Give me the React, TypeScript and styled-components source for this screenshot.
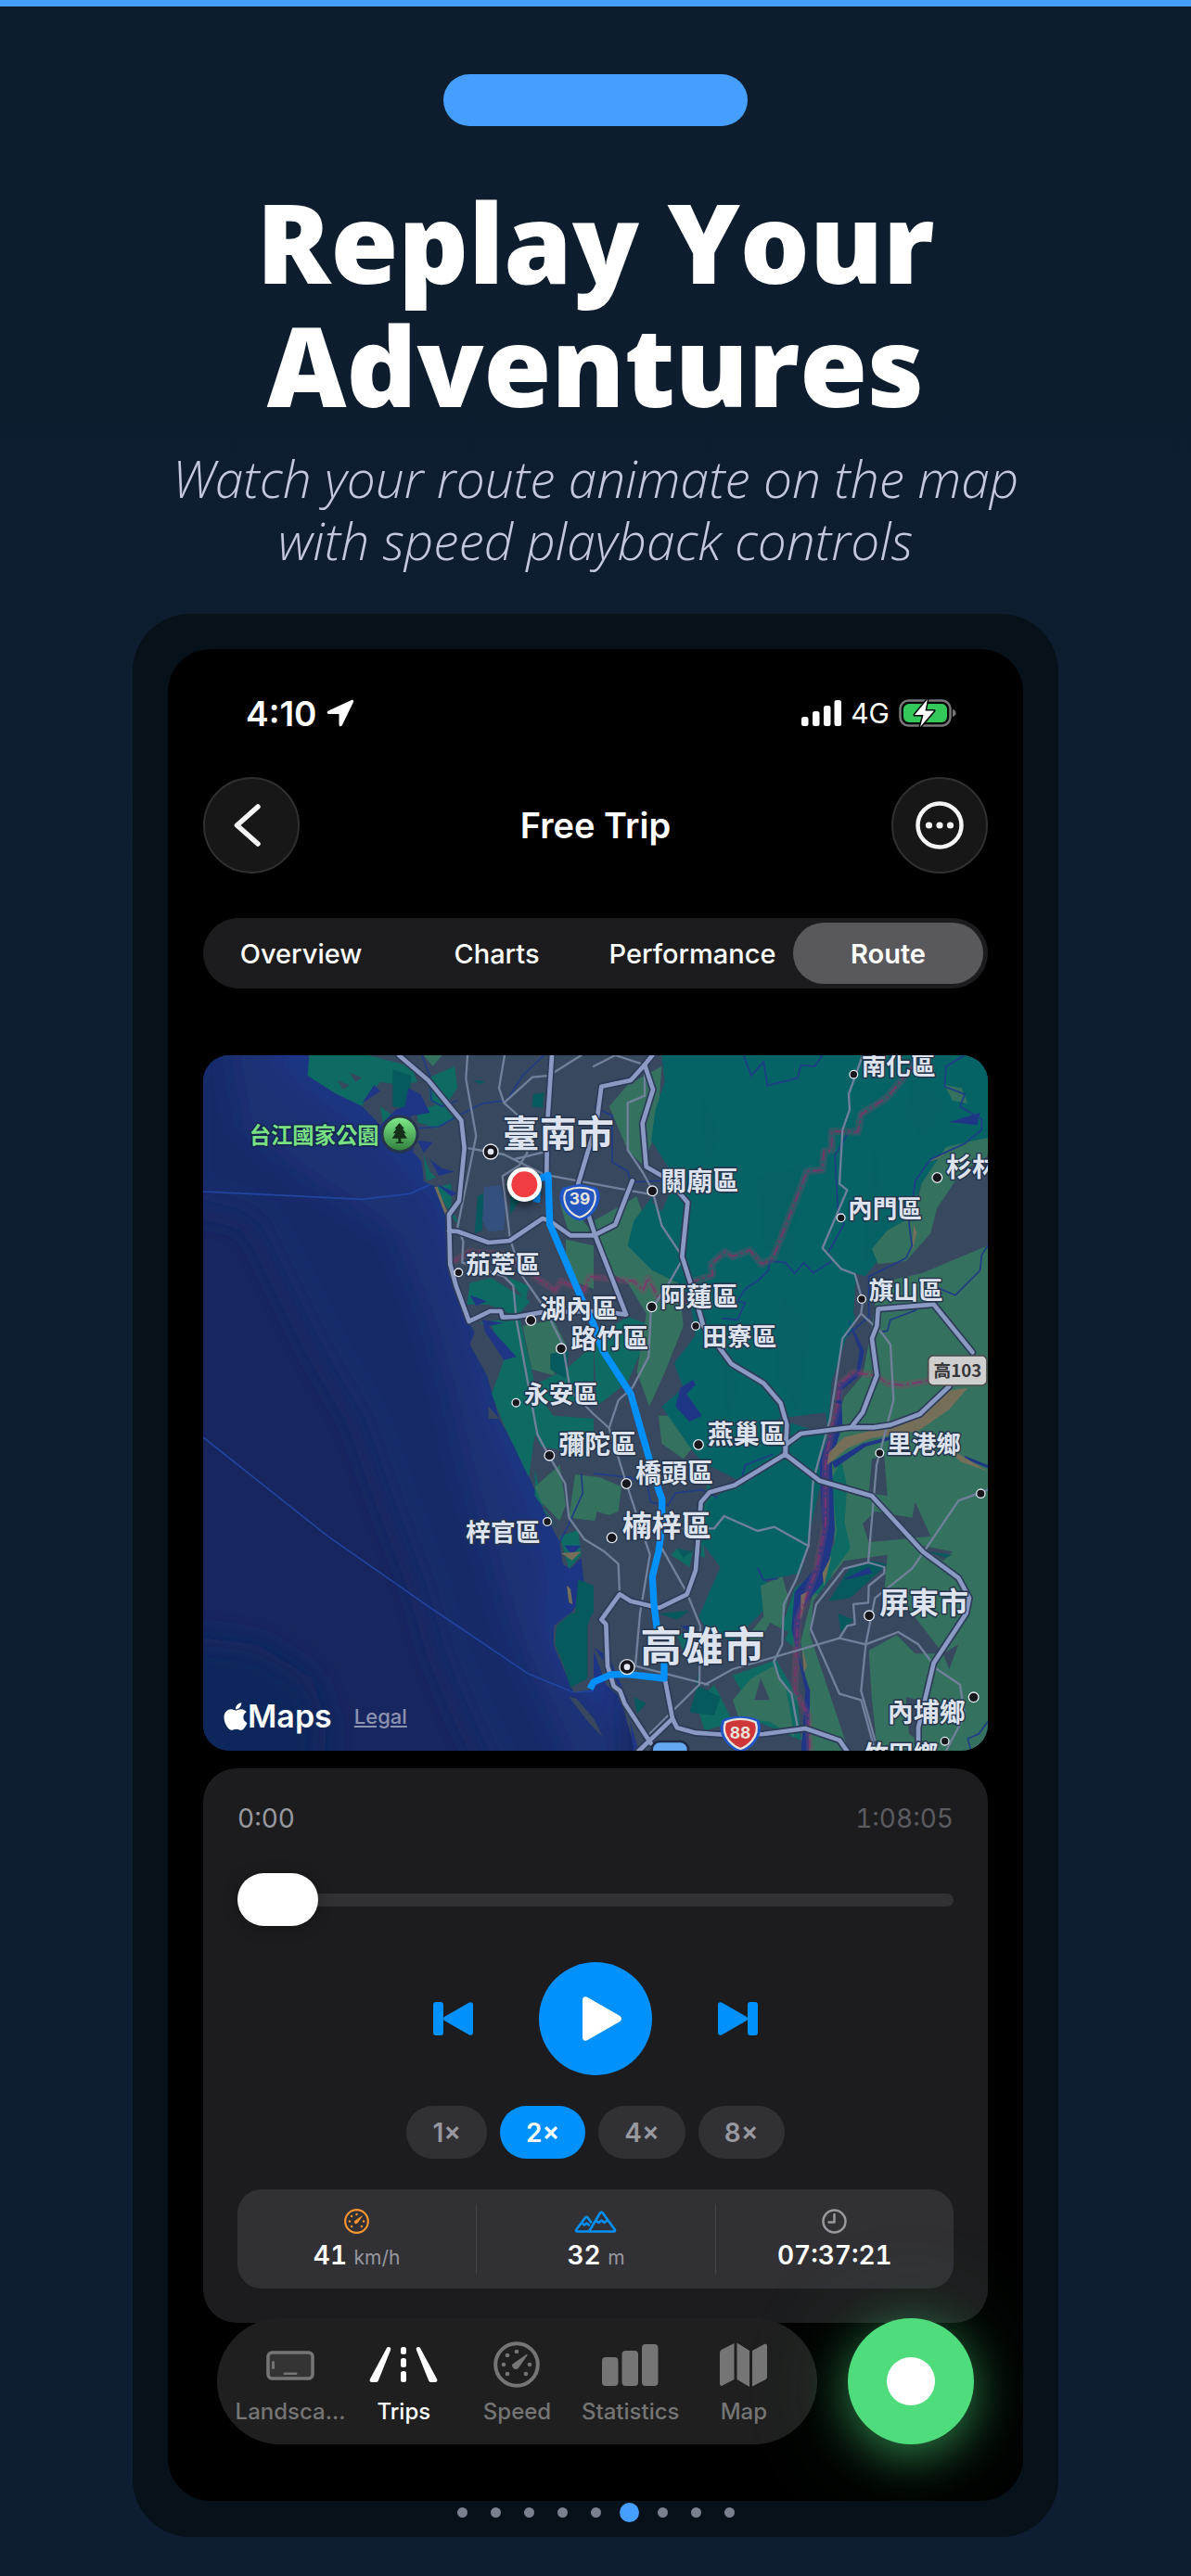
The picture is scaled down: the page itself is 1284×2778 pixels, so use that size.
import React, { useState } from "react";
import styled, { createGlobalStyle } from "styled-components";
import { FaApple } from "react-icons/fa";

const ui = `Inter, "Noto Sans CJK TC", sans-serif`;
const blue = "#0091ff";

const GlobalStyle = createGlobalStyle`
  *, *::before, *::after { box-sizing: border-box; }
  body { margin: 0; background: #0e1d2f; }
  button { font: inherit; color: inherit; border: 0; padding: 0; background: none; cursor: pointer; }
  svg { display: block; }
`;

/* ---------- Page ---------- */

const Page = styled.main`
  display: flex;
  flex-direction: column;
  align-items: center;
  border-top: 7px solid #469fff;
  padding: 73px 143px 42px;
  background: linear-gradient(#0e1d2e, #0e1d31);
  font-family: ${ui};
  color: #fff;
`;

const Pill = styled.div`
  width: 328px;
  height: 56px;
  border-radius: 28px;
  background: #469fff;
`;

const Headline = styled.h1`
  margin: 58px 0 0;
  font: 800 118px/133px "Open Sans", sans-serif;
  text-align: center;
`;

const Tagline = styled.p`
  margin: 22px 0 0;
  font: italic 300 55px/67px "Open Sans", sans-serif;
  text-align: center;
  color: #c4c8de;
`;

const Frame = styled.section`
  align-self: stretch;
  margin-top: 46px;
  padding: 38px 38px 16px;
  border-radius: 62px;
  background: #07111a;
`;

const Screen = styled.div`
  position: relative;
  overflow: hidden;
  padding: 46px 38px 192px;
  border-radius: 46px;
  background: #000;
`;

const Dots = styled.div`
  display: flex;
  justify-content: center;
  align-items: center;
  height: 21px;
  margin-top: 2px;
`;

const DotCell = styled.span<{ $active: boolean }>`
  display: grid;
  place-items: center;
  width: 36px;
  &::before {
    content: "";
    width: ${(p) => (p.$active ? 21 : 11)}px;
    height: ${(p) => (p.$active ? 21 : 11)}px;
    border-radius: 50%;
    background: ${(p) => (p.$active ? "#469fff" : "#7b808f")};
  }
`;

/* ---------- Status and navigation ---------- */

const StatusBar = styled.div`
  display: flex;
  justify-content: space-between;
  align-items: center;
  height: 46px;
  padding: 0 34px 0 46px;
`;

const StatusGroup = styled.div`
  display: flex;
  align-items: center;
  gap: 10px;
`;

const Clock = styled.span`
  font-size: 37px;
  font-weight: 600;
`;

const Carrier = styled.span`
  font-size: 30px;
  font-weight: 400;
`;

const NavBar = styled.header`
  display: flex;
  justify-content: space-between;
  align-items: center;
  margin-top: 46px;
`;

const RoundButton = styled.button`
  display: grid;
  place-items: center;
  width: 104px;
  height: 104px;
  border: 2px solid #303030;
  border-radius: 50%;
  background: #171717;
`;

const NavTitle = styled.h2`
  margin: 0;
  font-size: 38px;
  font-weight: 600;
`;

const Segments = styled.div`
  display: grid;
  grid-template-columns: repeat(4, 1fr);
  column-gap: 6px;
  height: 76px;
  margin-top: 48px;
  padding: 5px 5px 5px 3px;
  border-radius: 38px;
  background: #1c1c1e;
`;

const Segment = styled.button<{ $active: boolean }>`
  border-radius: 33px;
  background: ${(p) => (p.$active ? "#59585d" : "transparent")};
  font-size: 29px;
  font-weight: ${(p) => (p.$active ? 600 : 500)};
  white-space: nowrap;
`;

/* ---------- Map ---------- */

const MapCard = styled.div`
  position: relative;
  overflow: hidden;
  margin-top: 72px;
  border-radius: 28px;
`;

const MapSvg = styled.svg`
  width: 100%;
  height: auto;
  aspect-ratio: 2538 / 2250;
`;

const Attribution = styled.div`
  position: absolute;
  left: 22px;
  bottom: 17px;
  display: flex;
  align-items: center;
  gap: 24px;
`;

const MapsBrand = styled.span`
  display: flex;
  align-items: center;
  font-size: 34px;
  font-weight: 600;
`;

const AppleMark = styled(FaApple)`
  width: 26px;
  height: 34px;
`;

const LegalLink = styled.a`
  font-size: 22px;
  font-weight: 500;
  color: #8c92b0;
`;

/* ---------- Player ---------- */

const Player = styled.section`
  display: flex;
  flex-direction: column;
  margin-top: 19px;
  padding: 37px;
  border-radius: 36px;
  background: #1c1c1e;
`;

const Times = styled.div`
  display: flex;
  justify-content: space-between;
  font-size: 28px;
  line-height: 34px;
  font-variant-numeric: tabular-nums;
  color: #98989f;
`;

const Remaining = styled.span`
  color: #5b5b60;
`;

const Scrubber = styled.input`
  appearance: none;
  width: 100%;
  height: 57px;
  margin: 42px 0 0;
  background: transparent;
  &::-webkit-slider-runnable-track {
    height: 14px;
    border-radius: 7px;
    background: #313134;
  }
  &::-webkit-slider-thumb {
    appearance: none;
    width: 87px;
    height: 57px;
    margin-top: -22px;
    border-radius: 29px;
    background: #fff;
    box-shadow: 0 2px 16px rgba(0, 0, 0, 0.25);
  }
`;

const Transport = styled.div`
  display: flex;
  justify-content: center;
  align-items: center;
  gap: 71px;
  margin-top: 39px;
  color: ${blue};
`;

const PlayButton = styled.button`
  display: grid;
  place-items: center;
  width: 122px;
  height: 122px;
  border-radius: 50%;
  background: ${blue};
`;

const Speeds = styled.div`
  display: flex;
  justify-content: center;
  gap: 14px;
  margin-top: 33px;
`;

const SpeedChip = styled.button<{ $active: boolean }>`
  height: 57px;
  padding: 0 28px;
  border-radius: 29px;
  background: ${(p) => (p.$active ? blue : "#313035")};
  color: ${(p) => (p.$active ? "#fff" : "#98989f")};
  font-size: 28px;
  font-weight: 600;
`;

const Stats = styled.div`
  display: grid;
  grid-template-columns: repeat(3, 1fr);
  height: 107px;
  margin-top: 33px;
  padding: 16px 0;
  border-radius: 26px;
  background: #313035;
`;

const Stat = styled.div`
  display: flex;
  flex-direction: column;
  align-items: center;
  padding-top: 4px;
  gap: 7px;
  & + & { border-left: 1px solid #444449; }
`;

const StatValue = styled.div`
  font-size: 28px;
  line-height: 32px;
  font-weight: 600;
  font-variant-numeric: tabular-nums;
`;

const Unit = styled.span`
  font-size: 21px;
  font-weight: 400;
  color: #98989f;
`;

/* ---------- Floating tab bar ---------- */

const Floating = styled.div`
  position: absolute;
  left: 53px;
  right: 53px;
  bottom: 61px;
  display: flex;
  gap: 33px;
`;

const TabBar = styled.nav`
  flex: 1;
  display: grid;
  grid-template-columns: repeat(5, 1fr);
  height: 136px;
  padding: 0 18px;
  border-radius: 68px;
  background: #1f1f1f;
`;

const Tab = styled.button<{ $active: boolean }>`
  display: flex;
  flex-direction: column;
  align-items: center;
  padding-top: 25px;
  gap: 11px;
  color: ${(p) => (p.$active ? "#fff" : "#757575")};
  font-size: 24px;
  line-height: 30px;
  font-weight: 500;
  white-space: nowrap;
`;

const RecordButton = styled.button`
  display: grid;
  place-items: center;
  width: 136px;
  height: 136px;
  border-radius: 50%;
  background: #4edc7c;
  box-shadow: 0 12px 48px rgba(78, 220, 124, 0.5), 0 6px 120px rgba(78, 220, 124, 0.22);
  &::before {
    content: "";
    width: 52px;
    height: 52px;
    border-radius: 50%;
    background: #fff;
  }
`;

/* ---------- Icons ---------- */

const LocationIcon = () => (
  <svg width="30" height="30" viewBox="0 0 30 30" fill="#fff">
    <path d="M27 1 2 12.5C0 13.5.5 16 2.500 16H13.500V27.500c0 2 2.500 2.500 3.400.6L29 3C29.600 1.500 28.500.4 27 1Z" />
  </svg>
);

const SignalIcon = () => (
  <svg width="43" height="28" viewBox="0 0 43 28" fill="#fff">
    <rect y="18" width="7.500" height="10" rx="2.500" />
    <rect x="12" y="12" width="7.500" height="16" rx="2.500" />
    <rect x="24" y="6" width="7.500" height="22" rx="2.500" />
    <rect x="35.500" width="7.500" height="28" rx="2.500" />
  </svg>
);

const BatteryIcon = () => (
  <svg width="62" height="32" viewBox="0 0 62 32">
    <rect x="1.500" y="2.500" width="54" height="27" rx="9" fill="none" stroke="#77777a" strokeWidth="2.500" />
    <rect x="5" y="6" width="47" height="20" rx="6" fill="#34c759" />
    <path d="M58 12v8c2-.6 3.500-2 3.500-4s-1.500-3.400-3.500-4Z" fill="#77777a" />
    <path d="M31 1 17 18h9.500l-3.500 13L38 13.500h-9.500Z" fill="#fff" stroke="#000" strokeWidth="3" paintOrder="stroke" strokeLinejoin="round" />
  </svg>
);

const ChevronIcon = () => (
  <svg width="48" height="48" viewBox="0 0 48 48" fill="none" stroke="#f5f5f5" strokeWidth="5.500" strokeLinecap="round" strokeLinejoin="round">
    <path d="M31 4 8.500 24 31 44" />
  </svg>
);

const MoreIcon = () => (
  <svg width="52" height="52" viewBox="0 0 52 52" fill="#f5f5f5">
    <circle cx="26" cy="26" r="23.500" fill="none" stroke="#f5f5f5" strokeWidth="4.500" />
    <circle cx="14.500" cy="26" r="3.600" />
    <circle cx="26" cy="26" r="3.600" />
    <circle cx="37.500" cy="26" r="3.600" />
  </svg>
);

const PreviousIcon = () => (
  <svg width="43" height="36" viewBox="0 0 43 36" fill="currentColor">
    <rect width="11" height="36" rx="3" />
    <path d="M12 16 38.500.8C41-.4 43 .6 43 3v30c0 2.400-2 3.400-4.500 2.200L12 20c-1.400-1-1.400-3 0-4Z" />
  </svg>
);

const NextIcon = () => (
  <svg width="43" height="36" viewBox="0 0 43 36" fill="currentColor">
    <rect x="32" width="11" height="36" rx="3" />
    <path d="M31 16 4.500.8C2-.4 0 .6 0 3v30c0 2.400 2 3.400 4.500 2.200L31 20c1.400-1 1.400-3 0-4Z" />
  </svg>
);

const PlayIcon = () => (
  <svg width="56" height="48" viewBox="0 0 56 48" fill="#fff">
    <path d="M14 4c0-3.500 2.500-4.500 5.500-3l34 19.500c3.300 2 3.300 5 0 7L19.500 47c-3 1.500-5.500.5-5.500-3Z" />
  </svg>
);

const GaugeIcon = ({ size }: { size: number }) => (
  <svg width={size} height={size} viewBox="0 0 50 50" fill="currentColor">
    <circle cx="25" cy="25" r="22.800" fill="none" stroke="currentColor" strokeWidth="4" />
    <circle cx="25" cy="11" r="2.300" />
    <circle cx="15" cy="15" r="2.300" />
    <circle cx="11" cy="25" r="2.300" />
    <circle cx="39" cy="25" r="2.300" />
    <circle cx="15" cy="35" r="2.300" />
    <circle cx="35" cy="35" r="2.300" />
    <path d="M20.500 24.500 35.500 14c1-.6 1.600.2 1 1L27.500 28c-1.700 2.500-4.500 2.500-6 1s-1.800-3-1-4.500Z" />
  </svg>
);

const MountainIcon = () => (
  <svg width="46" height="27" viewBox="0 0 46 27" fill="none" stroke="currentColor" strokeWidth="2.600" strokeLinejoin="round" strokeLinecap="round">
    <path d="M16 24.500 28 4.500c.8-1.300 2-1.300 2.800 0l13 18c.7 1.200 0 2-1.200 2H3.500c-1.300 0-2-.8-1.200-2L12 9.500c.8-1 1.800-1 2.600 0l3.600 5" />
    <path d="m23.500 12.500 3 2.500 3-2.500 3 2.500 3-2.500M8.500 15.500l2.500 2 2.500-2 2.500 2" />
  </svg>
);

const TimeIcon = () => (
  <svg width="27" height="27" viewBox="0 0 27 27" fill="none" stroke="currentColor" strokeWidth="2.500" strokeLinecap="round" strokeLinejoin="round">
    <circle cx="13.500" cy="13.500" r="12" />
    <path d="M13.500 6v8.500H7.500" />
  </svg>
);

const LandscapeIcon = () => (
  <svg width="52" height="50" viewBox="0 0 52 50">
    <rect x="2" y="12" width="48" height="28" rx="4.500" fill="#343434" stroke="currentColor" strokeWidth="3.600" />
    <rect x="6" y="21" width="3" height="9" rx="1.500" fill="currentColor" />
    <rect x="18.500" y="33.500" width="15" height="2.400" rx="1.200" fill="currentColor" />
  </svg>
);

const RoadIcon = () => (
  <svg width="74" height="50" viewBox="0 0 74 50" fill="currentColor">
    <path d="M18.500 8c.4-1.300 1-2 2.300-2 1.900 0 3 1.200 2.300 3.200L10 42c-.6 1.500-1.400 2-3 2H3c-2 0-3-1.400-2-3.500Z" />
    <path d="M55.500 8c-.4-1.300-1-2-2.300-2-1.900 0-3 1.200-2.300 3.200L64 42c.6 1.500 1.400 2 3 2h4c2 0 3-1.400 2-3.500Z" />
    <rect x="34" y="6" width="6" height="8" rx="2.500" />
    <rect x="34" y="18" width="6" height="10" rx="2.500" />
    <rect x="34" y="32" width="6" height="12" rx="2.500" />
  </svg>
);

const BarsIcon = () => (
  <svg width="61" height="50" viewBox="0 0 61 50" fill="currentColor">
    <rect y="17" width="17.500" height="31" rx="4" />
    <rect x="21.500" y="10" width="17.500" height="38" rx="4" />
    <rect x="43" y="3" width="17.500" height="45" rx="4" />
  </svg>
);

const MapIcon = () => (
  <svg width="51" height="50" viewBox="0 0 51 50" fill="currentColor">
    <path d="M15.500 2v39L3 47.600c-1.600.8-3 .2-3-2V13c0-2 .6-3.300 2.300-4.200ZM18.500 1.500 32 10v39L18.500 41ZM35 10l13-7c1.600-.8 3 0 3 2v32.500c0 2-.6 3.200-2.300 4.100L35 48.500Z" />
  </svg>
);

/* ---------- Map drawing ---------- */

const mainRoads = [
  "660,24 755,105 862,235 872,325 855,495 822,540 826,700 845,770 887,885 955,852 990,852 995,872 1040,870 1120,856",
  "822,592 850,594 950,630 1018,624 1125,552 1148,560 1215,607 1290,607 1360,572 1415,430",
  "1155,24 1150,100 1140,250 1138,410",
  "1480,24 1455,55 1410,105 1315,125 1300,240 1240,440 1295,607 1395,863 1340,856",
  "1455,55 1482,135 1448,245 1460,385 1530,425 1594,500 1576,675 1625,830 1645,900 1735,1022 1840,1085 1895,1150 1915,1220 1910,1320",
  "1120,856 1290,852 1340,856",
  "2515,985 2390,830 2210,845 2206,900 2190,940 2206,1060 2160,1180 2125,1225",
  "2440,1095 2345,1185 2250,1220 2195,1228 2120,1228 1960,1248 1910,1285 1910,1315 1745,1415 1665,1438 1637,1470 1620,1690 1592,1768 1502,1812 1410,1790 1374,1768 1315,1850 1330,1865 1335,2000 1355,2065 1375,2080 1390,2120 1475,2250",
  "1910,1315 2020,1400 2190,1450 2355,1630 2470,1715 2505,1780 2495,1830 2390,1990 2340,2200 2340,2290",
  "1522,2050 1545,2170 1420,2290",
  "1545,2170 1560,2200 1620,2216 1740,2224 1840,2220 1975,2202 2085,2240 2120,2290",
];

const sideRoads = [
  "882,24 877,100 910,285 850,580 868,625 865,695 1000,740 1030,770 1040,880 1108,1250 1140,1310 1198,1410 1210,1520 1260,1590 1325,1630 1370,1670 1374,1768",
  "1002,24 984,130 1000,178 1070,240 1075,340 1050,380 995,415 1020,620 1060,740 1130,840 1190,960 1215,1110 1290,1185 1340,1230 1396,1410 1472,1640 1440,1830 1425,2000 1660,2060",
  "1000,178 1092,95 1145,90 1250,24",
  "870,322 1000,345 1130,410 1290,440 1480,475",
  "1035,360 1140,335",
  "1290,60 1360,24 1455,55 1455,155 1400,178 1400,330 1450,405 1480,460 1510,575 1580,680",
  "2160,24 2115,150 2118,200 2095,265 2085,440 2110,460 2030,648 2090,715 2135,732 2160,820 2155,860 2095,940 2055,1200 2000,1400 1985,1610 1945,1720 1905,1800 1900,1930 1873,1985 1890,2040 1930,2090 1950,2200",
  "2155,860 2220,920 2250,960 2260,1140 2205,1350 2178,1665 2100,1685 2010,1800 1992,1880 2085,2090 2155,2110 2200,2274",
  "2178,1665 2230,1680 2230,1700 2180,1740 2178,1795 2130,1800 2135,1865 2110,1870 2085,1910",
  "1650,2060 1740,2010 2085,1910 2170,1930 2275,1890 2340,1930 2400,2010 2475,2060 2490,2160 2430,2274",
  "2565,1430 2470,1465 2365,1620 2320,1685 2200,1780 2170,1930 2155,2080 2200,2240",
  "1500,1600 1590,1760 1635,1870 1632,2060 1470,2220",
  "1580,1555 1680,1555 1712,1515 1820,1563 1875,1550 1985,1612",
  "1580,680 1540,750 1475,850 1468,1000 1415,1100 1370,1140 1340,1230",
];

const streams = [
  "735,24 760,90 765,170 800,190 850,170",
  "725,260 790,255 860,215 930,180 1010,170 1060,90 1130,24",
  "1775,24 1800,90 1840,45 1852,122 1950,98 1960,55 2005,60 2030,24",
  "1290,190 1350,220 1350,370 1400,400 1410,435 1500,430 1570,415",
  "2110,280 2070,350 2080,520 2100,570 2050,660",
  "2490,24 2430,60 2425,125 2490,150 2475,190 2545,230 2545,265 2490,310 2380,360 2330,430 2325,470 2310,570 2320,640 2300,680 2180,740 2180,870 2110,930",
  "1860,690 1910,695 1940,730 1970,695 2000,728 2060,690",
  "1860,690 1855,720 1825,750 1780,780 1755,820 1780,825 1755,880 1705,875",
  "2565,640 2545,670 2540,720 2460,800 2400,775 2330,850 2250,880 2240,915 2220,920",
  "1290,1377 1410,1390 1465,1420 1475,1470 1530,1480 1555,1440 1640,1430 1690,1455",
  "1770,1390 1780,1350 1870,1315",
  "1250,1378 1255,1440 1210,1540 1180,1600",
  "1820,1683 1840,1722 1885,1717",
  "2565,2180 2535,2220 2500,2235 2510,2274",
];

type Place = { name: string; x: number; y: number; size: number; dot: [number, number]; capital?: boolean };

const places: Place[] = [
  { name: "臺南市", x: 995, y: 322, size: 120, dot: [957, 336], capital: true },
  { name: "高雄市", x: 1441, y: 1986, size: 134, dot: [1398, 2003], capital: true },
  { name: "屏東市", x: 2214, y: 1830, size: 96, dot: [2181, 1837] },
  { name: "楠梓區", x: 1382, y: 1582, size: 96, dot: [1349, 1585] },
  { name: "茄萣區", x: 877, y: 728, size: 80, dot: [853, 727] },
  { name: "湖內區", x: 1116, y: 877, size: 84, dot: [1087, 882] },
  { name: "路竹區", x: 1216, y: 972, size: 84, dot: [1185, 973] },
  { name: "永安區", x: 1065, y: 1150, size: 80, dot: [1039, 1148] },
  { name: "彌陀區", x: 1177, y: 1314, size: 84, dot: [1147, 1319] },
  { name: "梓官區", x: 877, y: 1596, size: 80, dot: [1140, 1533] },
  { name: "關廟區", x: 1507, y: 462, size: 84, dot: [1480, 463] },
  { name: "阿蓮區", x: 1505, y: 836, size: 84, dot: [1478, 838] },
  { name: "田寮區", x: 1642, y: 962, size: 80, dot: [1620, 900] },
  { name: "南化區", x: 2156, y: 88, size: 80, dot: [2131, 86] },
  { name: "內門區", x: 2112, y: 550, size: 80, dot: [2090, 550] },
  { name: "杉林區", x: 2430, y: 418, size: 84, dot: [2401, 420] },
  { name: "旗山區", x: 2180, y: 814, size: 80, dot: [2157, 813] },
  { name: "燕巢區", x: 1658, y: 1282, size: 84, dot: [1629, 1284] },
  { name: "橋頭區", x: 1425, y: 1407, size: 84, dot: [1396, 1410] },
  { name: "里港鄉", x: 2238, y: 1312, size: 80, dot: [2215, 1311] },
  { name: "內埔鄉", x: 2240, y: 2180, size: 84, dot: [2519, 2101] },
  { name: "竹田鄉", x: 2164, y: 2314, size: 80, dot: [2426, 2243] },
];

const CountyBorder = ({ points }: { points: string }) => (
  <g fill="none" strokeLinejoin="round">
    <polyline points={points} stroke="#8b4468" strokeWidth="24" opacity=".3" />
    <polyline points={points} stroke="#82336b" strokeWidth="7" strokeDasharray="34 10 8 10" opacity=".75" />
  </g>
);

const RouteMap = () => (
  <MapSvg viewBox="27 24 2538 2250" preserveAspectRatio="xMidYMid slice" role="img" aria-label="Route map">
    <defs>
      <filter id="soft" x="-20%" y="-20%" width="140%" height="140%"><feGaussianBlur stdDeviation="48" /></filter>
      <filter id="shade" x="-50%" y="-50%" width="200%" height="200%"><feGaussianBlur stdDeviation="14" /></filter>
      <linearGradient id="park" x2="0" y2="1"><stop stopColor="#80ec88" /><stop offset="1" stopColor="#2f7d3c" /></linearGradient>
    </defs>

    {/* sea */}
    <rect x="27" y="24" width="2538" height="2250" fill="#18265f" />
    <g filter="url(#soft)">
      <path d="M-60-60H1400V2400H980L860 2150 780 1960 720 1740 620 1480 520 1200 400 1000 280 760 180 560-60 500Z" fill="#182b6b" />
      <path d="M100-60H1400V2400H1260L1110 2080 1020 1860 940 1600 870 1340 820 1120 750 880 640 600 380 430 160 260Z" fill="#1c3074" />
      <path d="M190-60H1400V2200L1200 2060 1130 1900 1140 1700 1060 1450 940 1150 890 920 830 700 770 500 560 280 340 120Z" fill="#1f3685" />
      <path d="M-60 1900 200 1930 380 2040 430 2200 400 2400H-60Z" fill="#0d285c" />
    </g>
    <g fill="none" stroke="#2145a0" strokeWidth="5">
      <polyline points="27,465 540,490 695,472 815,418" />
      <polyline points="27,1260 430,1580 760,1810 1080,2026 1225,2085 1290,2080" />
    </g>

    {/* land */}
    <path fill="#38485f" d="M370 24 385 60 365 90 460 150 540 188 600 250 720 262 705 335 735 370 740 432 780 450 820 545 826 700 850 800 885 885 905 920 890 960 945 1060 985 1200 1045 1310 1082 1390 1130 1500 1180 1600 1190 1670 1215 1685 1250 1650 1262 1760 1220 1825 1162 1870 1160 1930 1210 2050 1225 2085 1290 2075 1290 1950 1330 2060 1375 2100 1430 2290H2565V24Z" />
    <path fill="#38485f" d="M1210 2100 1235 2105 1290 2170 1320 2230 1280 2190Z" />
    <g fill="#0d6b64">
      <path d="M370 24 365 90 460 150 540 188 600 110 660 120 720 110 700 60 560 24ZM760 95 840 60 850 130 800 200 760 170ZM600 190 680 250 610 250ZM720 200 800 180 840 230 780 260 720 240ZM740 345 760 400 780 420 750 430Z" />
      <path d="M780 450 830 440 830 520 860 580 830 545ZM890 760 960 745 1030 790 1085 820 1040 870 950 830 880 830ZM920 890 1050 870 1100 1090 1200 1040 1290 960 1290 1300 1250 1330 1180 1300 1120 1290 1100 1250 1080 1390 1000 1220 960 1120 1000 1010 960 900Z" />
      <path d="M1010 740 1080 770 1070 820ZM1180 1580 1240 1560 1250 1640 1210 1685ZM1290 940 1400 870 1480 900 1400 1080 1300 1160ZM1100 1360 1130 1500 1180 1560 1100 1450Z" />
      <path d="M1660 1400 1690 1480 1640 1550 1650 1650 1560 1620 1540 1640 1600 1680ZM1560 1900 1610 1880 1580 1950ZM1620 2120 1680 2060 1740 2180 1650 2210ZM1740 2030 1880 1980 1950 2100 1960 2240 1820 2180Z" />
    </g>
    <path fill="#34715f" d="M1060 900 1160 880 1200 960 1160 1060 1090 1040ZM1200 620 1290 640 1290 780 1240 760 1200 690ZM1180 1350 1200 1480 1180 1530 1120 1470 1100 1420ZM1230 1380 1310 1390 1380 1420 1370 1500 1290 1530 1210 1520ZM1340 190 1400 120 1510 60 1500 200 1480 300 1450 380 1400 330ZM1290 560 1430 480 1480 640 1560 700 1580 900 1520 1050 1470 1160 1430 1050 1460 860 1400 760 1330 720ZM740 24H800L770 60ZM1500 1190 1600 1190 1640 1260 1580 1330 1510 1280ZM1180 500 1240 540 1290 600 1210 600Z" />

    <path fill="#056365" d="M1510 24 1520 110 1490 200 1476 300 1540 400 1560 470 1480 480 1420 560 1400 640 1480 720 1560 760 1600 800 1620 930 1550 1020 1580 1100 1510 1160 1600 1290 1640 1340 1760 1400 1660 1470 1640 1600 1700 1680 1630 1840 1660 1890 1740 1920 1840 1820 1850 1720 1960 1700 1990 1560 2040 1340 2060 1080 2130 900 2150 760 2200 700 2320 540 2350 440 2440 350 2565 290V24Z" />
    <g fill="#0a5c60" opacity=".3">
      <path d="M1820 420 1960 380 1930 700 1840 640ZM1640 150 1700 300 1650 360ZM2200 300 2240 620 2160 700ZM2320 100 2420 180 2360 300 2300 220ZM1900 800 1990 900 1950 1180 1880 1060ZM1700 960 1760 1100 1720 1200Z" />
    </g>
    <path fill="#34715f" d="M2190 650 2240 590 2330 540 2350 440 2430 320 2565 290V350L2480 400 2400 520 2380 600 2300 690 2210 700ZM2210 760 2350 730 2565 640V2290H2000L1960 2240 1980 2080 1960 1920 2000 1760 2070 1620 2060 1400 2050 1300 2100 1130 2160 1060 2190 900ZM2425 120 2480 130 2500 180 2450 170ZM1830 1740 1900 1710 1920 1780 1890 1900 1810 1960 1790 1900 1840 1840ZM1800 2040 1870 2000 1910 2060 1940 2230 1860 2180 1760 2170 1740 2110Z" />
    <g fill="#0d6b64">
      <path d="M2090 1480 2120 1620 2060 1700 2040 1780 2000 1760 2070 1600ZM2060 1400 2090 1330 2110 1420 2100 1560 2080 1600ZM2000 1700 1960 1780 1940 1940 1890 1900 1940 1750Z" />
    </g>

    {/* built-up areas */}
    <g fill="#38485f">
      <path d="M2000 1790 2100 1660 2240 1640 2230 1760 2290 1790 2420 1960 2330 1960 2270 1900 2180 1950 2190 2110 2210 2290H2120L2040 2050 1990 1900ZM2160 1540 2200 1500 2320 1520 2330 1470 2380 1580 2180 1600ZM2190 1330 2230 1320 2240 1450 2180 1440ZM2060 1080 2110 930 2140 960 2100 1060 2070 1180ZM2140 730 2170 740 2160 880 2130 860ZM1880 1200 2050 1250 2040 1180ZM1480 430 1540 460 1510 530 1480 500ZM1290 60 1400 30 1430 100 1320 160 1290 330ZM1290 350 1390 390 1380 450 1290 480ZM2300 2100 2340 2110 2340 2240 2310 2220ZM2420 1960 2470 1930 2440 2010ZM2350 1610 2450 1630 2420 1660ZM1830 2040 1860 2110 1810 2110ZM1860 1860 1920 1890 1880 1980 1780 2010ZM1300 1500 1370 1520 1360 1580 1290 1560Z" />
      <path d="M460 105 500 120 480 135ZM500 80 540 95 520 110ZM660 130 700 150 690 230 650 200ZM890 950 930 945 990 1030 980 1070 930 1030ZM950 1160 985 1200 950 1200ZM1130 1150 1290 1140 1290 1200 1160 1190Z" />
    </g>
    <g fill="#06595c">
      <path d="M640 70 700 90 690 200 640 190ZM1095 150 1130 145 1125 195 1090 190ZM900 105 940 108 920 118ZM915 480 935 470 930 590 905 600ZM1150 990 1210 980 1200 1070 1150 1040ZM1020 480 1040 440 1060 480 1020 540ZM1240 1720 1290 1740 1290 1830 1230 1830ZM1215 1830 1290 1815 1270 1870 1270 2040 1215 2070 1190 1990 1165 1930 1170 1870ZM1420 2100 1460 2120 1430 2155ZM1500 1830 1600 1820 1560 1850ZM1640 1980 1620 2060 1700 2100 1680 2160 1600 2150 1620 2080ZM2120 1680 2190 1660 2240 1670 2120 1780 2050 1790ZM2370 1630 2450 1640 2430 1650ZM1560 1620 1610 1630 1580 1650ZM2080 1830 2130 1850 2090 1890Z" />
    </g>
    <path fill="#34507c" d="M935 450 990 445 1005 500 1000 590 950 595 930 560Z" />
    <g fill="#1f3686">
      <path d="M690 130 730 150 760 210 700 220 690 260 600 250 650 200 680 190ZM540 180 580 120 600 140ZM720 300 770 305 740 340ZM890 800 945 820 910 835ZM930 880 1000 890 950 900 1040 1000 1000 1010 940 920ZM1195 1610 1250 1610 1220 1640ZM760 360 800 390 840 400 790 415ZM780 440 850 470 830 480ZM1570 1100 1610 1075 1620 1090 1590 1120 1640 1190 1600 1210 1555 1160ZM1290 1940 1340 1970 1400 2110 1420 2290H1440L1380 2080 1320 1980ZM1570 1870 1600 1870 1600 1890Z" />
      <path d="M2110 870 2165 980 2150 1060 2090 1110 2095 1220 2060 1330 2070 1560 2040 1720 1960 1820 1950 1960 1990 2080 1985 2290H1960L1975 2080 1930 1880 1940 1760 2010 1680 2030 1560 2020 1340 2070 1200 2080 1090 2140 1050 2150 980Z" />
      <path d="M2400 800 2420 790 2400 820ZM2440 240 2540 210 2530 250ZM2100 1720 2180 1680 2190 1700 2110 1720Z" />
      <path d="M2060 1340 2160 1280 2260 1255 2260 1265 2170 1290 2070 1360ZM2490 1320 2565 1350V1360L2490 1330Z" />
    </g>
    <g fill="#756f5a">
      <path d="M775 450 785 450 820 540 812 545ZM1185 1635 1250 1630 1220 1658ZM1203 1740 1215 1750 1222 1800 1210 1795ZM2050 1310 2100 1260 2260 1220 2360 1180 2430 1110 2500 1100 2440 1170 2340 1240 2190 1262 2110 1296 2045 1350ZM2380 1260 2490 1325 2565 1370 2480 1340ZM2030 1700 2060 1640 2035 1740ZM1960 1770 1980 1760 1960 1850ZM1965 1940 1980 2000 1970 2020ZM2370 370 2430 340 2400 360ZM2325 570 2335 600 2320 660Z" />
    </g>
    <g fill="none" stroke="#203b88" strokeWidth="5">{streams.map((s) => <polyline key={s} points={s} />)}</g>

    <CountyBorder points="822,700 890,660 1000,670 1100,740 1165,785 1185,755 1260,785 1275,740 1420,755 1450,785 1465,745 1500,810 1590,820" />
    <CountyBorder points="1600,760 1675,735 1670,700 1715,660 1740,675 1795,655 1835,700 1870,680 1980,400 2030,395 2035,335 2060,330 2060,270 2145,272 2155,215 2240,160 2330,50" />
    <CountyBorder points="2080,1140 2085,1090 2130,1050 2205,1060 2240,1085 2290,1092 2380,1075" />
    <CountyBorder points="2080,1150 2060,1230 2040,1340 2040,1540 2010,1690 1950,1850 1940,2080 1985,2160 1990,2290" />

    {/* roads */}
    <g fill="none" strokeLinejoin="round" strokeLinecap="round">
      {sideRoads.map((r) => <polyline key={r} points={r} stroke="#71809b" strokeWidth="7" />)}
      {mainRoads.map((r) => <polyline key={r} points={r} stroke="#2d3b58" strokeWidth="24" />)}
      {mainRoads.map((r) => <polyline key={r} points={r} stroke="#8a9ac3" strokeWidth="14" />)}
    </g>

    <polyline
      points="1105,500 1112,425 1143,412 1148,570 1250,810 1290,895 1320,980 1410,1120 1450,1260 1490,1400 1511,1460 1511,1550 1500,1630 1480,1710 1485,1800 1495,1880 1518,1980 1518,2040 1395,2026 1345,2028 1290,2052 1278,2074"
      fill="none" stroke={blue} strokeWidth="22" strokeLinejoin="round"
    />

    {/* places */}
    <circle cx="2542" cy="1442" r="14" fill="#16161c" stroke="#e4e8f2" strokeWidth="4" />
    {places.map((p) => (
      <g key={p.name}>
        <circle cx={p.dot[0]} cy={p.dot[1]} r={p.capital ? 24 : p.size > 82 ? 16 : 13} fill="#16161c" stroke="#e4e8f2" strokeWidth="4" />
        {p.capital && <circle cx={p.dot[0]} cy={p.dot[1]} r="10" fill="#e4e8f2" />}
        <text
          x={p.x} y={p.y} fontSize={p.size} fontWeight="700" fill="#dde4f0"
          stroke="#26344c" strokeWidth="9" strokeLinejoin="round" paintOrder="stroke"
          fontFamily={`"Noto Sans CJK TC", sans-serif`}
        >
          {p.name}
        </text>
      </g>
    ))}

    {/* national park */}
    <text x="176" y="310" fontSize="70" fontWeight="700" fill="#79e084" stroke="#14264f" strokeWidth="9" paintOrder="stroke" fontFamily={`"Noto Sans CJK TC", sans-serif`}>台江國家公園</text>
    <circle cx="663" cy="279" r="57" fill="url(#park)" stroke="#26344c" strokeWidth="9" />
    <path d="M662 243 646 262H652L641 277H649L638 293H658V305H650V309H675V305H667V293H687L676 277H683L672 262H678Z" fill="#143018" />

    {/* road shields */}
    <g fontFamily="Inter, sans-serif" fontWeight="700" textAnchor="middle">
      <path d="M1245 440 1300 452C1316 470 1312 505 1290 532 1270 556 1245 560 1245 560S1220 556 1200 532C1178 505 1174 470 1190 452Z" fill="#1f55c6" />
      <path d="M1202 462C1230 450 1262 450 1290 462 1300 480 1296 505 1280 525 1262 545 1245 548 1245 548S1228 545 1210 525C1194 505 1190 480 1202 462Z" fill="#2456c0" stroke="#e8e4dc" strokeWidth="6" />
      <text x="1245" y="507" fontSize="52" fill="#e8e4dc">39</text>
      <path d="M1706 2174C1740 2158 1790 2158 1824 2174 1836 2200 1830 2225 1812 2248 1792 2272 1765 2280 1765 2280S1738 2272 1718 2248C1700 2225 1694 2200 1706 2174Z" fill="#1f55c6" />
      <path d="M1716 2182C1746 2168 1784 2168 1814 2182 1822 2204 1818 2222 1802 2242 1785 2262 1765 2268 1765 2268S1745 2262 1728 2242C1712 2222 1708 2204 1716 2182Z" fill="#cf3639" stroke="#e8e4dc" strokeWidth="7" />
      <text x="1764" y="2234" fontSize="52" fill="#e8e4dc">88</text>
    </g>
    <rect x="2372" y="996" width="190" height="96" rx="16" fill="#cfcfcf" stroke="#4b4b4b" strokeWidth="5" />
    <text x="2467" y="1065" fontSize="56" fontWeight="700" fill="#37373a" textAnchor="middle" fontFamily={`"Noto Sans CJK TC", sans-serif`}>高103</text>

    <rect x="1478" y="2244" width="118" height="70" rx="26" fill="#64a8f2" stroke="#202a44" strokeWidth="8" />

    {/* start marker */}
    <circle cx="1066" cy="456" r="56" fill="#000" opacity=".5" filter="url(#shade)" />
    <circle cx="1066" cy="442" r="56" fill="#fff" />
    <circle cx="1066" cy="442" r="42" fill="#f13d41" />
  </MapSvg>
);

/* ---------- App ---------- */

const segments = ["Overview", "Charts", "Performance", "Route"];
const speeds = ["1×", "2×", "4×", "8×"];
const tabs = [
  { label: "Landsca...", icon: <LandscapeIcon /> },
  { label: "Trips", icon: <RoadIcon /> },
  { label: "Speed", icon: <GaugeIcon size={50} /> },
  { label: "Statistics", icon: <BarsIcon /> },
  { label: "Map", icon: <MapIcon /> },
];

const IconTint = styled.span<{ $color: string }>`
  display: grid;
  place-items: center;
  height: 28px;
  color: ${(p) => p.$color};
`;

export default function App() {
  const [segment, setSegment] = useState("Route");
  const [speed, setSpeed] = useState("2×");
  const [tab, setTab] = useState("Trips");
  const [position, setPosition] = useState(0);

  return (
    <Page>
      <GlobalStyle />
      <Pill />
      <Headline>Replay Your<br />Adventures</Headline>
      <Tagline>Watch your route animate on the map<br />with speed playback controls</Tagline>

      <Frame>
        <Screen>
          <StatusBar>
            <StatusGroup><Clock>4:10</Clock><LocationIcon /></StatusGroup>
            <StatusGroup><SignalIcon /><Carrier>4G</Carrier><BatteryIcon /></StatusGroup>
          </StatusBar>

          <NavBar>
            <RoundButton aria-label="Back"><ChevronIcon /></RoundButton>
            <NavTitle>Free Trip</NavTitle>
            <RoundButton aria-label="More"><MoreIcon /></RoundButton>
          </NavBar>

          <Segments>
            {segments.map((s) => (
              <Segment key={s} $active={s === segment} aria-pressed={s === segment} onClick={() => setSegment(s)}>{s}</Segment>
            ))}
          </Segments>

          <MapCard>
            <RouteMap />
            <Attribution>
              <MapsBrand><AppleMark />Maps</MapsBrand>
              <LegalLink href="#legal">Legal</LegalLink>
            </Attribution>
          </MapCard>

          <Player>
            <Times><span>0:00</span><Remaining>1:08:05</Remaining></Times>
            <Scrubber type="range" min={0} max={4085} value={position} aria-label="Playback position" onChange={(e) => setPosition(Number(e.target.value))} />
            <Transport>
              <button aria-label="Previous"><PreviousIcon /></button>
              <PlayButton aria-label="Play"><PlayIcon /></PlayButton>
              <button aria-label="Next"><NextIcon /></button>
            </Transport>
            <Speeds>
              {speeds.map((s) => (
                <SpeedChip key={s} $active={s === speed} aria-pressed={s === speed} onClick={() => setSpeed(s)}>{s}</SpeedChip>
              ))}
            </Speeds>
            <Stats>
              <Stat>
                <IconTint $color="#ff9530"><GaugeIcon size={27} /></IconTint>
                <StatValue>41 <Unit>km/h</Unit></StatValue>
              </Stat>
              <Stat>
                <IconTint $color={blue}><MountainIcon /></IconTint>
                <StatValue>32 <Unit>m</Unit></StatValue>
              </Stat>
              <Stat>
                <IconTint $color="#98989f"><TimeIcon /></IconTint>
                <StatValue>07:37:21</StatValue>
              </Stat>
            </Stats>
          </Player>

          <Floating>
            <TabBar>
              {tabs.map((t) => (
                <Tab key={t.label} $active={t.label === tab} onClick={() => setTab(t.label)}>{t.icon}{t.label}</Tab>
              ))}
            </TabBar>
            <RecordButton aria-label="Record" />
          </Floating>
        </Screen>

        <Dots>
          {Array.from({ length: 9 }, (_, i) => <DotCell key={i} $active={i === 5} />)}
        </Dots>
      </Frame>
    </Page>
  );
}
